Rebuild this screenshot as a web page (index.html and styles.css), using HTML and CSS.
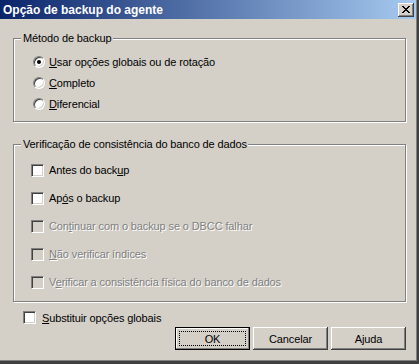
FILE: index.html
```html
<!DOCTYPE html>
<html lang="pt">
<head>
    <meta charset="UTF-8">
    <title>Opção de backup do agente</title>
    <link rel="stylesheet" href="styles.css">
</head>
<body>
    <div class="window">
        <div class="frame">
            <div class="titlebar">
                <span class="title">Opção de backup do agente</span>
                <span class="close-btn">
                    <svg width="8" height="7" viewBox="0 0 8 7" shape-rendering="crispEdges">
                        <path fill="#000" d="M0 0h2v1H0z M6 0h2v1H6z M1 1h2v1H1z M5 1h2v1H5z M2 2h4v1H2z M3 3h2v1H3z M2 4h4v1H2z M1 5h2v1H1z M5 5h2v1H5z M0 6h2v1H0z M6 6h2v1H6z"/>
                    </svg>
                </span>
            </div>

            <div class="content">
                <div class="group group-method">
                    <span class="group-title">Método de backup</span>
                    <div class="rows">
                        <label class="row"><span class="radio checked"></span><span><u>U</u>sar opções globais ou de rotação</span></label>
                        <label class="row"><span class="radio"></span><span><u>C</u>ompleto</span></label>
                        <label class="row"><span class="radio"></span><span><u>D</u>iferencial</span></label>
                    </div>
                </div>

                <div class="group group-check">
                    <span class="group-title">Verificação de consistência do banco de dados</span>
                    <div class="rows">
                        <label class="row"><span class="checkbox"></span><span>Antes do back<u>u</u>p</span></label>
                        <label class="row"><span class="checkbox"></span><span>Ap<u>ó</u>s o backup</span></label>
                        <label class="row disabled"><span class="checkbox"></span><span>Con<u>t</u>inuar com o backup se o DBCC falhar</span></label>
                        <label class="row disabled"><span class="checkbox"></span><span><u>N</u>ão verificar índices</span></label>
                        <label class="row disabled"><span class="checkbox"></span><span>V<u>e</u>rificar a consistência física do banco de dados</span></label>
                    </div>
                </div>

                <label class="override"><span class="checkbox"></span><span><u>S</u>ubstituir opções globais</span></label>

                <div class="buttons">
                    <span class="btn btn-default"><span class="focus">OK</span></span>
                    <span class="btn">Cancelar</span>
                    <span class="btn">Ajuda</span>
                </div>
            </div>
        </div>
    </div>
</body>
</html>
```

FILE: styles.css
```css
/* styles.css */
* {
    margin: 0;
    padding: 0;
    box-sizing: border-box;
}

body {
    font-family: 'Liberation Sans', Arial, sans-serif;
    font-size: 11px;
    color: #000;
    background: #404040;
}

.window {
    width: 419px;
    height: 364px;
    border-right: 2px solid #404040;
    border-bottom: 3px solid #404040;
}

.frame {
    height: 100%;
    background: #d4d0c8;
    border-right: 1px solid #808080;
    border-bottom: 1px solid #808080;
}

/* title bar */
.titlebar {
    height: 19px;
    display: flex;
    align-items: center;
    justify-content: space-between;
    padding: 0 2px 0 3px;
    background: linear-gradient(to right, #0a246a, #a6caf0);
}

.title {
    color: #fff;
    font-weight: bold;
    font-size: 12px;
}

.close-btn {
    width: 16px;
    height: 14px;
    display: flex;
    align-items: center;
    justify-content: center;
    background: #d4d0c8;
    box-shadow: inset -1px -1px 0 #404040, inset 1px 1px 0 #fff, inset -2px -2px 0 #808080;
}

.close-btn svg {
    display: block;
}

/* body */
.content {
    padding: 0 10px 0 13px;
    letter-spacing: -0.12px;
}

.group {
    border: 1px solid #808080;
    box-shadow: inset 1px 1px 0 #fff, 1px 1px 0 #fff;
}

.group-title {
    display: block;
    width: fit-content;
    margin: -7px 0 0 7px;
    padding: 0 1px 0 2px;
    line-height: 13px;
    background: #d4d0c8;
}

.group-method {
    margin-top: 19px;
    height: 84px;
}

.group-method .rows {
    margin-top: 6px;
    padding-left: 19px;
}

.group-method .row {
    height: 21px;
}

.group-check {
    margin-top: 22px;
    height: 158px;
}

.group-check .rows {
    margin-top: 5px;
    padding-left: 17px;
}

.group-check .row {
    height: 28px;
}

.row {
    display: flex;
    align-items: center;
    gap: 5px;
}

.row.disabled {
    color: #808080;
    text-shadow: 1px 1px 0 #fff;
}

u {
    text-underline-offset: 1px;
}

/* controls */
.radio {
    width: 12px;
    height: 12px;
    border-radius: 50%;
    border: 1px solid;
    border-color: #808080 #fff #fff #808080;
    box-shadow: inset 1px 1px 0 #404040, inset -1px -1px 0 #d4d0c8;
    background: #fff;
    display: flex;
    align-items: center;
    justify-content: center;
    margin-right: -1px;
}

.radio.checked::after {
    content: '';
    width: 4px;
    height: 4px;
    border-radius: 50%;
    background: #000;
}

.checkbox {
    width: 13px;
    height: 13px;
    flex: none;
    border: 1px solid;
    border-color: #808080 #fff #fff #808080;
    box-shadow: inset 1px 1px 0 #404040, inset -1px -1px 0 #d4d0c8;
    background: #fff;
}

.disabled .checkbox {
    background: #d4d0c8;
}

.override {
    display: flex;
    align-items: center;
    gap: 6px;
    height: 13px;
    margin: 9px 0 0 10px;
}

/* buttons */
.buttons {
    display: flex;
    justify-content: flex-end;
    gap: 3px;
    margin-top: 3px;
}

.btn {
    width: 75px;
    height: 23px;
    display: flex;
    align-items: center;
    justify-content: center;
    background: #d4d0c8;
    box-shadow: inset -1px -1px 0 #404040, inset 1px 1px 0 #fff, inset -2px -2px 0 #808080;
}

.btn-default {
    border: 1px solid #000;
    box-shadow: inset -1px -1px 0 #808080, inset 1px 1px 0 #fff;
    padding: 3px;
}

.focus {
    width: 100%;
    height: 100%;
    display: flex;
    align-items: center;
    justify-content: center;
    border: 1px dotted #000;
}
```
